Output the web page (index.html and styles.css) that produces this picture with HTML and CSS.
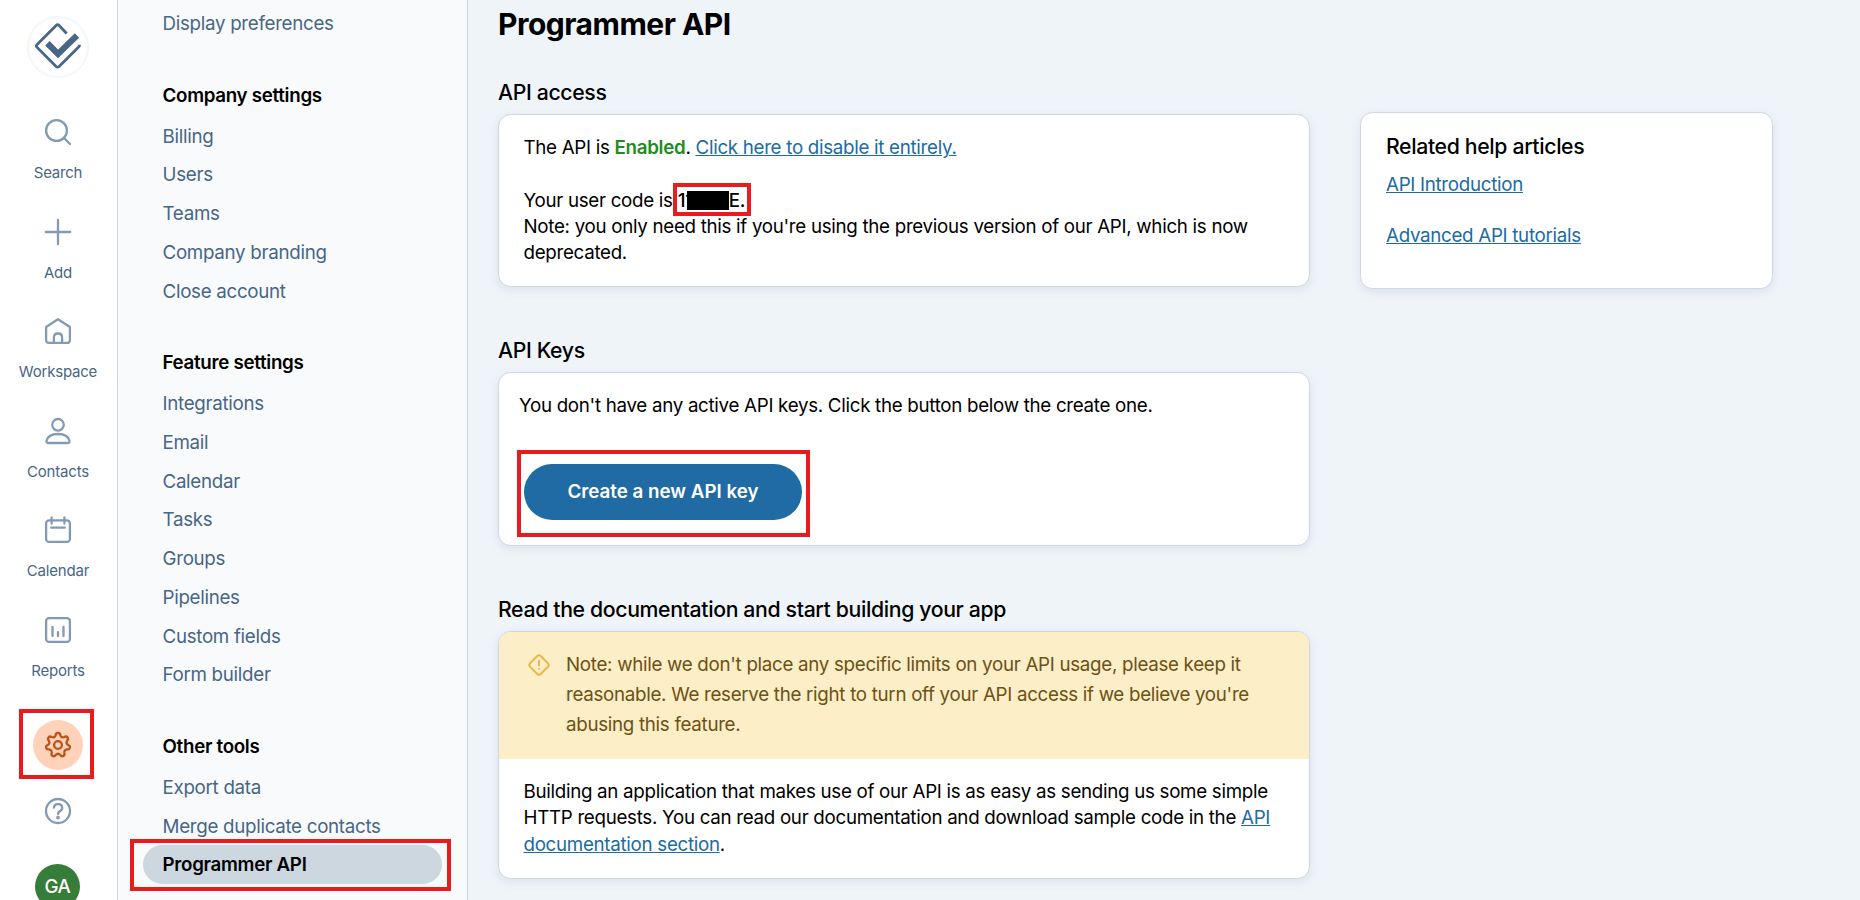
FILE: index.html
```html
<!DOCTYPE html>
<html lang="en">
<head>
  <meta charset="UTF-8" />
  <meta name="viewport" content="width=device-width, initial-scale=1.0" />
  <title>Programmer API</title>
  <link rel="stylesheet" href="styles.css">
</head>
<body>
  <div class="app">
    <!-- Icon rail -->
    <nav class="rail">
      <a class="logo" href="#">
        <svg width="62" height="62" viewBox="0 0 62 62" fill="none" stroke="#486685">
          <path d="M39.7 17.5 L32.1 9.5 Q30.6 8.1 29.1 9.5 L10.1 28.4 Q8.7 29.9 10.1 31.4 L29.1 50.4 Q30.6 51.8 32.1 50.4 L51.6 31 Q52.6 30 52.6 28.8" stroke-width="2.8"/>
          <path d="M20.4 27.3 L31 37.9 L50 19.6" stroke-width="6.2"/>
        </svg>
      </a>
      <a class="rail-item" href="#">
        <svg class="icon" viewBox="0 0 26 26"><circle cx="11.5" cy="11.5" r="10.4"/><path d="M19 19 L25 25"/></svg>
        <span>Search</span>
      </a>
      <a class="rail-item" href="#">
        <svg class="icon" viewBox="0 0 26 26"><path d="M13 0.8 V25.2 M0.8 13 H25.2"/></svg>
        <span>Add</span>
      </a>
      <a class="rail-item" href="#">
        <svg class="icon" viewBox="0 0 26 26"><path d="M1.1 9 L13 1.2 L24.9 9 V21.9 Q24.9 24.9 21.9 24.9 H4.1 Q1.1 24.9 1.1 21.9 Z"/><path d="M8.9 24.9 V19.5 Q8.9 15.5 13 15.5 Q17.1 15.5 17.1 19.5 V24.9"/></svg>
        <span>Workspace</span>
      </a>
      <a class="rail-item" href="#">
        <svg class="icon" viewBox="0 0 26 26"><circle cx="13" cy="6.8" r="5.8"/><path d="M3 25 Q1.3 25 1.5 22.8 Q3.3 16 13 16 Q22.7 16 24.5 22.8 Q24.7 25 23 25 Z"/></svg>
        <span>Contacts</span>
      </a>
      <a class="rail-item" href="#">
        <svg class="icon" viewBox="0 0 26 26"><rect x="1.1" y="3.4" width="23.8" height="21.5" rx="3"/><path d="M6.6 0.5 V6.5 M19.4 0.5 V6.5 M6.2 10.7 H19.8"/></svg>
        <span>Calendar</span>
      </a>
      <a class="rail-item" href="#">
        <svg class="icon" viewBox="0 0 26 26"><rect x="1.1" y="1.1" width="23.8" height="23.8" rx="3"/><path d="M7.5 9.8 V19 M13 15.2 V19 M18.5 9.8 V19"/></svg>
        <span>Reports</span>
      </a>
      <a class="settings" href="#">
        <svg class="icon gear" viewBox="-13 -13 26 26"><path d="M-2.27 -9.94 C-1.9 -12.9 1.9 -12.9 2.27 -9.94 Q3.3 -6.85 6.36 -7.97 C8.9 -9.53 11.27 -6.55 9.19 -4.43 Q7.41 -1.69 10.2 0 C13 1.01 12.15 4.73 9.19 4.43 Q5.94 4.74 6.36 7.97 C7.31 10.8 3.88 12.45 2.27 9.94 Q0 7.6 -2.27 9.94 C-3.88 12.45 -7.31 10.8 -6.36 7.97 Q-5.94 4.74 -9.19 4.43 C-12.15 4.73 -13 1.01 -10.2 0 Q-7.41 -1.69 -9.19 -4.43 C-11.27 -6.55 -8.9 -9.53 -6.36 -7.97 Q-3.3 -6.85 -2.27 -9.94 Z"/><circle cx="0" cy="0" r="3.9"/></svg>
        <i class="highlight highlight-settings"></i>
      </a>
      <a class="help" href="#">
        <svg class="icon" viewBox="0 0 26 26"><circle cx="13" cy="13" r="12"/><path d="M8.9 9.6 Q9.2 6.2 13 6.2 Q17.2 6.2 17.2 10 Q17.2 12.2 14.6 13.4 Q13 14.2 13 16"/><circle class="dot" cx="13" cy="19.6" r="1.9"/></svg>
      </a>
      <a class="avatar" href="#">GA</a>
    </nav>

    <!-- Settings menu -->
    <aside class="menu">
      <a href="#">Display preferences</a>

      <h3>Company settings</h3>
      <a href="#">Billing</a>
      <a href="#">Users</a>
      <a href="#">Teams</a>
      <a href="#">Company branding</a>
      <a href="#">Close account</a>

      <h3>Feature settings</h3>
      <a href="#">Integrations</a>
      <a href="#">Email</a>
      <a href="#">Calendar</a>
      <a href="#">Tasks</a>
      <a href="#">Groups</a>
      <a href="#">Pipelines</a>
      <a href="#">Custom fields</a>
      <a href="#">Form builder</a>

      <h3>Other tools</h3>
      <a href="#">Export data</a>
      <a href="#">Merge duplicate contacts</a>
      <a class="active" href="#">Programmer API<i class="highlight highlight-menu"></i></a>
    </aside>

    <!-- Page content -->
    <main class="content">
      <div class="column">
        <h1>Programmer API</h1>

        <section>
          <h2>API access</h2>
          <div class="card card-access">
            <p>The API is <b class="enabled">Enabled</b>. <a href="#">Click here to disable it entirely.</a></p>
            <p>Your user code is <span class="code">11<span class="redacted"></span>E.<i class="highlight highlight-code"></i></span><br>Note: you only need this if you're using the previous version of our API, which is now deprecated.</p>
          </div>
        </section>

        <section>
          <h2>API Keys</h2>
          <div class="card card-keys">
            <p>You don't have any active API keys. Click the button below the create one.</p>
            <button class="btn">Create a new API key<i class="highlight highlight-btn"></i></button>
          </div>
        </section>

        <section>
          <h2>Read the documentation and start building your app</h2>
          <div class="card card-docs">
            <div class="notice">
              <svg width="22" height="22" viewBox="0 0 22 22" fill="none" stroke="#ebb63f" stroke-width="1.9" stroke-linecap="round"><path d="M9.3 2 Q11 0.6 12.7 2 L20 9.3 Q21.4 11 20 12.7 L12.7 20 Q11 21.4 9.3 20 L2 12.7 Q0.6 11 2 9.3 Z"/><path d="M11 6.8 V11.3 M11 14.7 V14.9"/></svg>
              <p>Note: while we don't place any specific limits on your API usage, please keep it reasonable. We reserve the right to turn off your API access if we believe you're abusing this feature.</p>
            </div>
            <p class="docs-text">Building an application that makes use of our API is as easy as sending us some simple HTTP requests. You can read our documentation and download sample code in the <a href="#">API documentation section</a>.</p>
          </div>
        </section>
      </div>

      <div class="card related">
        <h2>Related help articles</h2>
        <a href="#">API Introduction</a>
        <a href="#">Advanced API tutorials</a>
      </div>
    </main>
  </div>
</body>
</html>
```
FILE: styles.css
```css
* {
  box-sizing: border-box;
}
body {
  margin: 0;
  height: 100vh;
  overflow: hidden;
  background: #eff4f9;
  font-family: 'Inter', sans-serif;
  font-size: 18.75px;
  line-height: 26.25px;
  letter-spacing: -0.3px;
  color: #000;
}
h1, h2, h3, p {
  margin: 0;
}
a {
  color: #206ba4;
}
.app {
  display: flex;
  height: 900px;
  overflow: hidden;
}

/* Icon rail */
.rail {
  flex: none;
  width: 118px;
  padding: 16px 1px 0 0;
  display: flex;
  flex-direction: column;
  align-items: center;
  background: #fff;
  border-right: 1px solid #ccd7e2;
}
.rail a {
  flex: none;
  text-decoration: none;
}
.logo {
  width: 62px;
  height: 62px;
  margin-bottom: 41px;
  border-radius: 50%;
  box-shadow: inset 0 0 4px #dfe8f3;
}
.rail-item {
  height: 99.6px;
  display: flex;
  flex-direction: column;
  align-items: center;
  color: #486685;
  font-size: 15px;
  line-height: 20px;
  letter-spacing: -0.2px;
}
.rail-item span {
  margin-top: 18px;
}
.icon {
  width: 26px;
  height: 26px;
  display: block;
  overflow: visible;
  fill: none;
  stroke: #829ab4;
  stroke-width: 2.3;
  stroke-linecap: round;
  stroke-linejoin: round;
}
.icon .dot {
  fill: #829ab4;
  stroke: none;
}
.settings {
  position: relative;
  width: 50px;
  height: 50px;
  margin-top: 3px;
  display: flex;
  align-items: center;
  justify-content: center;
  background: #ffd2b9;
  border-radius: 50%;
}
.gear {
  stroke: #b8531a;
}
.help {
  margin-top: 28px;
}
.avatar {
  width: 45px;
  height: 45px;
  margin: 40px 1px 0 0;
  border-radius: 50%;
  background: #357d38;
  color: #fff;
  font-weight: 500;
  line-height: 45px;
  text-align: center;
}

/* Settings menu */
.menu {
  flex: none;
  width: 350px;
  padding: 4px 25px 0;
  background: #f9fafc;
  border-right: 1px solid #ccd7e2;
}
.menu a {
  position: relative;
  display: block;
  height: 38.75px;
  padding-left: 19.5px;
  line-height: 39px;
  color: #486685;
  text-decoration: none;
}
.menu h3 {
  height: 73.75px;
  padding: 33px 0 0 19.5px;
  font-size: 18.75px;
  font-weight: 600;
  line-height: 40px;
}
.menu .active {
  background: #ccd7e0;
  border-radius: 20px;
  color: #000;
  font-weight: 600;
}

/* Page content */
.content {
  flex: 1;
  display: flex;
  align-items: flex-start;
  gap: 50px;
  padding-left: 30px;
}
.column {
  width: 812px;
}
h1 {
  height: 78px;
  padding-top: 4px;
  font-size: 30px;
  font-weight: 700;
  line-height: 40px;
  letter-spacing: -0.5px;
}
h2 {
  font-size: 21.25px;
  font-weight: 500;
  line-height: 28px;
  letter-spacing: -0.36px;
}
section {
  margin-bottom: 49px;
}
section h2 {
  margin-bottom: 8px;
}
.card {
  background: #fff;
  border: 1px solid #ccd7e2;
  border-radius: 12.5px;
  box-shadow: 0 3px 10px rgba(72, 102, 133, 0.12);
}
.card-access {
  height: 173px;
  padding: 20px 24.5px;
}
.card-access p + p {
  margin-top: 26.25px;
}
.enabled {
  color: #248a24;
  font-weight: 600;
}
.code {
  position: relative;
  font-weight: 500;
}
.redacted {
  position: relative;
  display: inline-block;
  width: 42px;
  height: 19px;
  margin-left: -6px;
  background: #000;
  vertical-align: -3px;
}
.card-keys {
  height: 174px;
  padding: 20px;
}
.btn {
  position: relative;
  width: 278px;
  height: 56px;
  margin: 45px 0 0 5px;
  border: none;
  border-radius: 28px;
  background: #206ba4;
  color: #fff;
  font: inherit;
  font-weight: 600;
  letter-spacing: 0;
  cursor: pointer;
}
.card-docs {
  height: 248px;
  overflow: hidden;
}
.notice {
  display: flex;
  height: 127px;
  padding: 18px 50px 0 29px;
  background: #fceec7;
  color: #6c5215;
  line-height: 30px;
}
.notice svg {
  flex: none;
  margin: 4px 16px 0 0;
}
.docs-text {
  padding: 20px 24.5px;
}
.related {
  width: 413px;
  height: 177px;
  margin-top: 112px;
  padding: 19px 25px;
}
.related a {
  display: block;
  width: fit-content;
  margin: 12px 0 25px;
}

/* Red callout frames */
.highlight {
  position: absolute;
  border: 4px solid #e81c1e;
  pointer-events: none;
}
.highlight-settings {
  inset: -11px -11px -9px -14px;
}
.highlight-menu {
  inset: -6px -9px -7px -13px;
}
.highlight-code {
  inset: -6px -6px -4px -5px;
}
.highlight-btn {
  inset: -14px -8px -17px -7px;
}
```
